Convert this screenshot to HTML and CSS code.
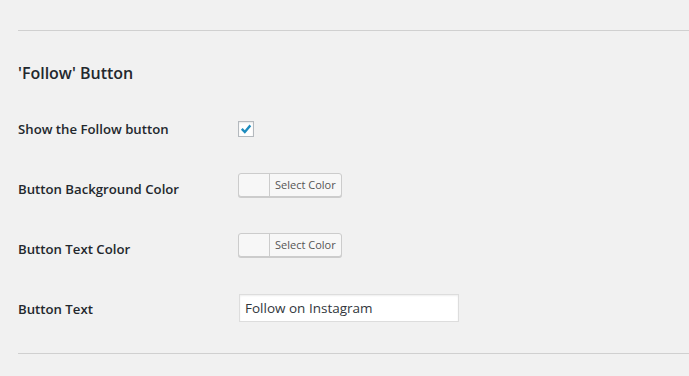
FILE: index.html
```html
<!DOCTYPE html>
<html lang="en">
      <head>
      <meta charset="UTF-8" />
      <title>Follow Button Settings</title>
      <link rel="stylesheet" href="styles.css">
      </head>
      <body>
      <div class="settings">
            <hr class="divider" />
            <h2>'Follow' Button</h2>
            <div class="form-table">
                  <div class="row">
                        <div class="label">Show the Follow button</div>
                        <div class="field field-check">
                              <span class="checkbox">
                                    <svg viewBox="0 0 16 16" width="15" height="15"><path d="M2.2 8.4 L4.2 6.4 L6.6 8.9 L12 2.4 L14 4.3 L6.7 12.9 Z" fill="#1e8cbe"/></svg>
                              </span>
                        </div>
                  </div>
                  <div class="row">
                        <div class="label">Button Background Color</div>
                        <div class="field field-color">
                              <button class="color-btn"><span class="swatch"></span><span class="color-text">Select Color</span></button>
                        </div>
                  </div>
                  <div class="row">
                        <div class="label">Button Text Color</div>
                        <div class="field field-color">
                              <button class="color-btn"><span class="swatch"></span><span class="color-text">Select Color</span></button>
                        </div>
                  </div>
                  <div class="row">
                        <div class="label">Button Text</div>
                        <div class="field field-text">
                              <input type="text" class="text-input" value="Follow on Instagram" />
                        </div>
                  </div>
            </div>
            <hr class="divider bottom" />
      </div>
      </body>
</html>
```

FILE: styles.css
```css
body {
      margin: 0;
      background: #f1f1f1;
      color: #23282d;
      font-family: "Open Sans", Arial, sans-serif;
      font-size: 13px;
}
.settings {
      padding-left: 18px;
}
.divider {
      margin: 30px 0 0;
      border: none;
      border-top: 1px solid #d0d0d0;
      height: 0;
}
.divider.bottom {
      margin-top: 14px;
}
h2 {
      margin: 31px 0 15px;
      font-size: 16px;
      line-height: 22px;
      font-weight: 600;
      color: #23282d;
}
.row {
      display: flex;
      height: 60px;
}
.label {
      width: 220px;
      padding-top: 20px;
      line-height: 20px;
      font-weight: 600;
      font-size: 13.2px;
}
.field-check {
      padding-top: 22px;
}
.field-color {
      padding-top: 14px;
}
.field-text {
      padding-top: 15px;
}
.checkbox {
      display: flex;
      align-items: center;
      justify-content: center;
      width: 14px;
      height: 14px;
      border: 1px solid #b4b9be;
      background: #fff;
      box-shadow: inset 0 1px 2px rgba(0, 0, 0, 0.1);
}
.color-btn {
      display: flex;
      align-items: stretch;
      height: 24px;
      padding: 0;
      border: 1px solid #ccc;
      border-radius: 3px;
      background: #f7f7f7;
      box-shadow: 0 1px 0 #ccc;
      font-family: inherit;
      cursor: pointer;
}
.swatch {
      width: 30px;
      border-right: 1px solid #ccc;
      border-radius: 2px 0 0 2px;
}
.color-text {
      padding: 0 5px 0 5px;
      font-size: 11px;
      line-height: 22px;
      color: #555;
}
.text-input {
      box-sizing: border-box;
      width: 220px;
      height: 28px;
      margin-left: 1px;
      padding: 2px 6px 2px 5px;
      border: 1px solid #ddd;
      background: #fff;
      box-shadow: inset 0 1px 2px rgba(0, 0, 0, 0.07);
      font-family: inherit;
      font-size: 13.5px;
      color: #32373c;
}
```
